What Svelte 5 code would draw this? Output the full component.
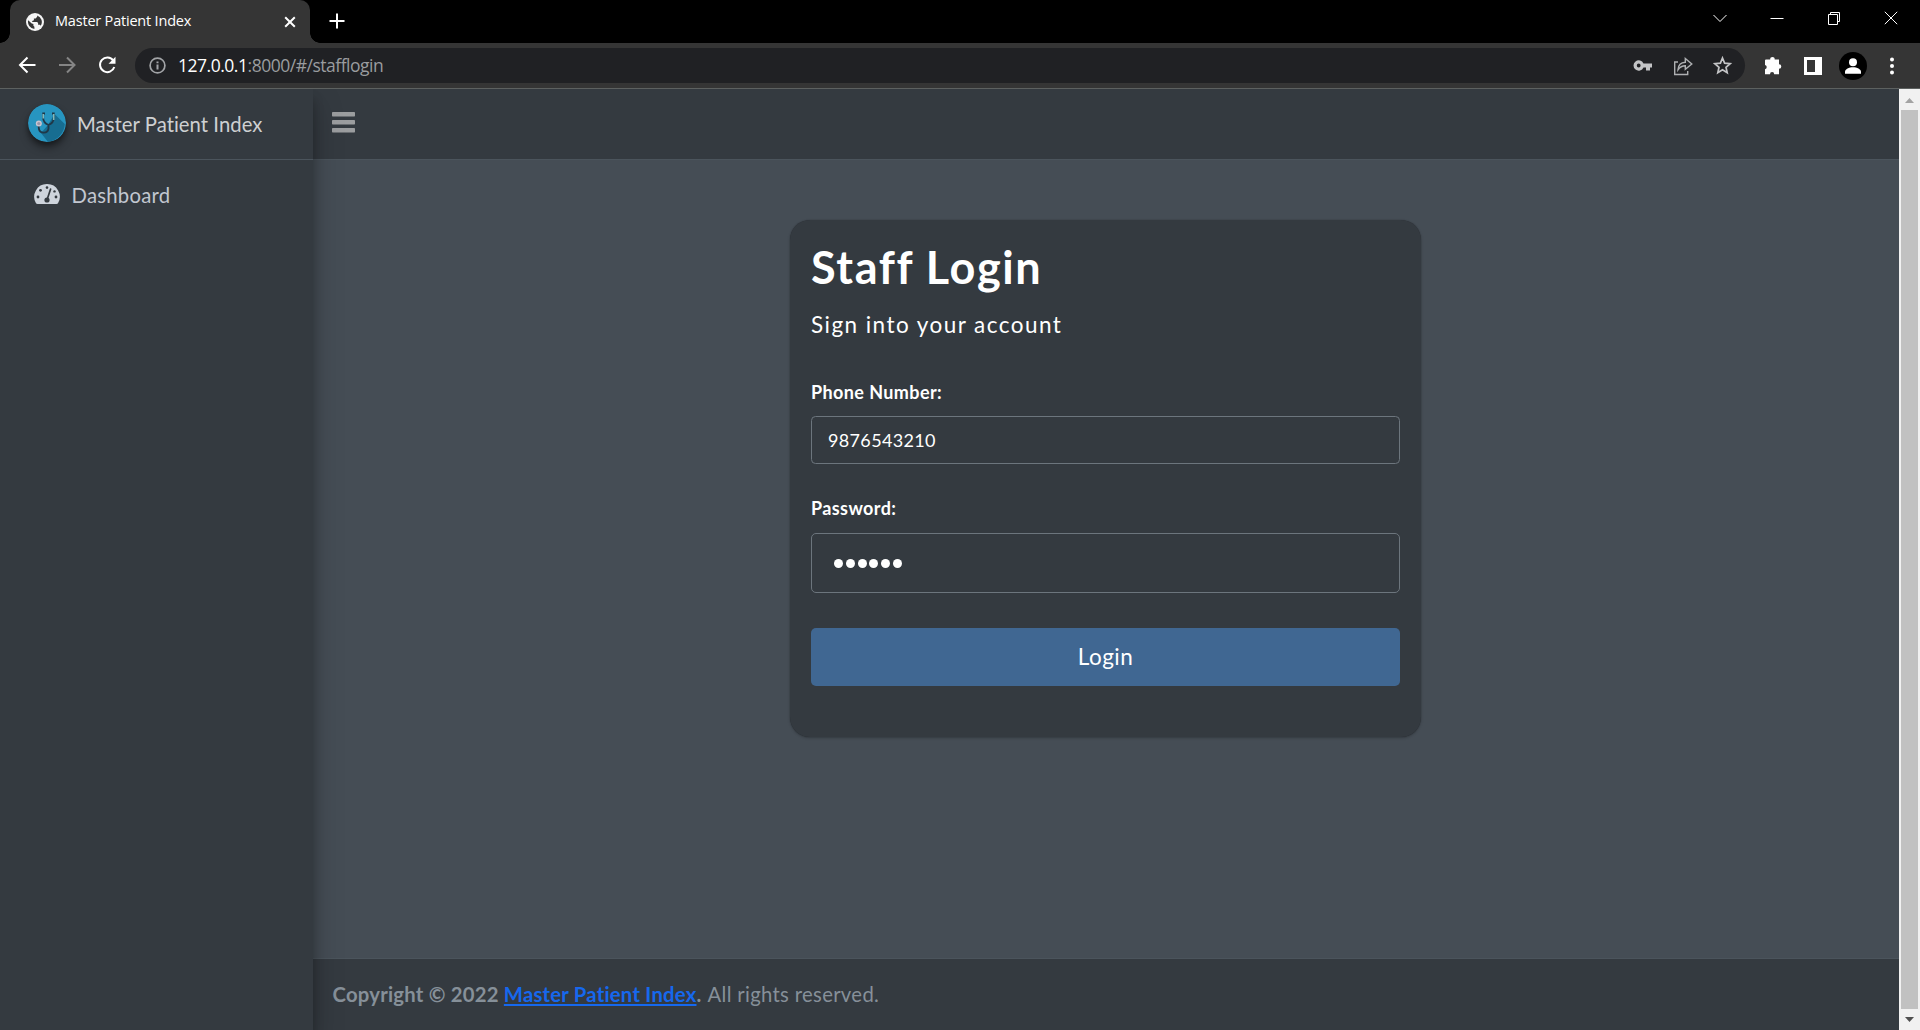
<script>
  const site = 'Master Patient Index';
  let phone = $state('9876543210');
  const dots = [0, 1, 2, 3, 4, 5];
</script>

<div class="window">
  <div class="tabstrip">
    <div class="tab">
      <svg class="globe" width="18" height="18" viewBox="0 0 18 18">
        <circle cx="9" cy="9" r="9" fill="#f5f5f5" />
        <path d="M2.2 7.2 5.7 10.6 7.4 11v1.8l1 .9v2.2A7 7 0 0 1 2.2 7.2ZM11.2 2.4v1.4L9.6 5.4H7.9v1.8L6.2 8v1h4.9l1 1v1.8h1.8l.8.9A6.9 6.9 0 0 0 11.2 2.4Z" fill="#353535" />
      </svg>
      <span class="tabtitle">{site}</span>
      <svg width="12" height="12" viewBox="0 0 12 12" stroke="#fff" stroke-width="2"><path d="m1.2 1.2 9.6 9.6m0-9.6-9.6 9.6" /></svg>
    </div>
    <svg class="plus" width="16" height="16" viewBox="0 0 16 16" stroke="#fff" stroke-width="2"><path d="M8 .5v15M.5 8h15" /></svg>
    <div class="controls">
      <svg width="14" height="14" viewBox="0 0 14 14"><path d="m.5 4 6.5 6.5L13.500 4" /></svg>
      <svg width="14" height="14" viewBox="0 0 14 14"><path d="M.5 7.5h13" /></svg>
      <svg width="14" height="14" viewBox="0 0 14 14"><path d="M1.500 3.500h9v10h-9zM3.500 3.500v-2h9v9h-2" /></svg>
      <svg width="14" height="14" viewBox="0 0 14 14"><path d="m.8.8 12.4 12.4m0-12.4L.8 13.2" /></svg>
    </div>
  </div>

  <div class="toolbar">
    <div class="nav">
      <svg width="18" height="18" viewBox="0 0 18 18" stroke="#fff"><path d="M17.500 9H2m7.500-7.500L2 9l7.500 7.500" /></svg>
      <svg width="18" height="18" viewBox="0 0 18 18" stroke="#858585"><path d="M1 9h15.500M9 1.500 16.500 9 9 16.500" /></svg>
      <svg width="18" height="18" viewBox="0 0 18 18" stroke="#fff"><path d="M15.300 4.600A7.300 7.300 0 1 0 16.300 11" /><path d="M17.500.8v7h-7z" fill="#fff" stroke="none" /></svg>
    </div>
    <div class="address">
      <svg class="info" width="18" height="18" viewBox="0 0 18 18" fill="none" stroke="#a2a4a7" stroke-width="1.700"><circle cx="9.500" cy="8.500" r="7.400" /><path d="M9.500 7.500v5M9.500 4.500v1.800" stroke-width="2" /></svg>
      <span class="url"><b>127.0.0.1</b>:8000/#/stafflogin</span>
      <div class="actions">
        <svg width="20" height="20" viewBox="0 0 20 20"><path fill="#c3c4c6" fill-rule="evenodd" d="M10.500 7.500A5.200 5.200 0 1 0 10.500 11.500H13v3h4v-3h2v-4ZM5.700 7.600a1.900 1.900 0 1 1 0 3.800 1.900 1.900 0 0 1 0-3.800Z" /></svg>
        <svg width="20" height="20" viewBox="0 0 20 20" fill="none" stroke="#aeb0b2" stroke-width="1.400"><path d="M5 6H1.700v12.500h13V15M5 13.800C5.300 9 8 6.500 12.300 6.300V2.500L18.800 8l-6.500 5.300V9.800C9 9.800 7 11 5 13.800Z" /></svg>
        <svg width="20" height="20" viewBox="0 0 20 20" fill="none" stroke="#c3c4c6" stroke-width="1.700"><path d="m9.500 2 2.100 5.100 5.600.5-4.200 3.700 1.200 5.400-4.700-2.900-4.700 2.900L6 11.300 1.800 7.600l5.600-.5Z" /></svg>
      </div>
    </div>
    <div class="extras">
      <svg width="20" height="20" viewBox="0 0 20 20" fill="#fff"><path d="M3 3.600h4.300a2.200 2.200 0 1 1 4.300 0H16v4.600a2.300 2.300 0 1 1 0 4.600v5.400h-4.800a2.100 2.100 0 0 0-4.200 0H2v-5a2.200 2.200 0 0 0 0-4.300V4.600a1 1 0 0 1 1-1Z" /></svg>
      <svg width="20" height="20" viewBox="0 0 20 20"><path fill="#fff" fill-rule="evenodd" d="M1 1h18v18H1Zm3 3v12h8V4Z" /></svg>
      <svg width="28" height="28" viewBox="0 0 28 28"><circle cx="14" cy="14" r="14" fill="#000" /><circle cx="14" cy="10.200" r="4" fill="#fff" /><path fill="#fff" d="M6 21.700v-2c0-2.700 4-4.500 8-4.500s8 1.800 8 4.500v2Z" /></svg>
      <svg width="6" height="18" viewBox="0 0 6 18" fill="#fff"><circle cx="3" cy="2.500" r="2" /><circle cx="3" cy="9" r="2" /><circle cx="3" cy="15.500" r="2" /></svg>
    </div>
  </div>

  <div class="page">
    <aside>
      <div class="brand">
        <svg class="logo" width="38" height="38" viewBox="0 0 38 38">
          <circle cx="19" cy="19" r="19" fill="#2795c0" />
          <path d="M26.500 10 36.800 20A19 19 0 0 1 20 37.900L13 29l7-8Z" fill="#176d91" />
          <g fill="none" stroke="#203848" stroke-width="1.800">
            <path d="M17 9.500h-1.800V14c0 4 2.500 5.800 5.300 7 2.800-1.200 5.300-3 5.300-7V9.500H24M20.500 20.500v4a4.900 4.900 0 0 1-9.600.5L10.500 21" />
          </g>
          <path d="M15.200 10v4.500M25.800 10v6" stroke="#9fd8d4" stroke-width="1.200" />
          <circle cx="10.800" cy="19.500" r="3" fill="#c9c4d0" /><circle cx="10.800" cy="19.500" r="1.600" fill="#9995a8" />
        </svg>
        <span>{site}</span>
      </div>
      <div class="menuitem">
        <svg width="26" height="21" viewBox="0 0 26 21">
          <path fill="#ced4dc" d="M13 0A12.700 12.700 0 0 0 2 19.200Q2.500 20 3.500 20h19q1 0 1.500-.8A12.700 12.700 0 0 0 13 0Z" />
          <g fill="#343a40"><circle cx="13" cy="3.600" r="1.300" /><circle cx="6.500" cy="6.300" r="1.400" /><circle cx="4" cy="13" r="1.400" /><circle cx="20.500" cy="7.400" r="1.200" /><circle cx="22" cy="13" r="1.400" /><circle cx="13" cy="16" r="2.600" /></g>
          <path d="m13.300 15 3.300-10" stroke="#343a40" stroke-width="1.700" stroke-linecap="round" />
        </svg>
        <span>Dashboard</span>
      </div>
    </aside>

    <div class="content">
      <header>
        <svg width="23" height="21" viewBox="0 0 23 21" fill="#9b9d9f"><rect width="23" height="4.500" rx=".7" /><rect y="8" width="23" height="4.500" rx=".7" /><rect y="16" width="23" height="4.500" rx=".7" /></svg>
      </header>
      <main>
        <form class="card">
          <h1>Staff Login</h1>
          <p class="sub">Sign into your account</p>
          <label class="phonelabel" for="phone">Phone Number:</label>
          <input id="phone" bind:value={phone} />
          <label class="passlabel" for="pass">Password:</label>
          <div id="pass" class="password">
            {#each dots as dot (dot)}<i></i>{/each}
          </div>
          <button type="button">Login</button>
        </form>
      </main>
      <footer>
        <strong>Copyright © 2022 <a href="#/">{site}</a>.</strong>
        <span class="rights">All rights reserved.</span>
      </footer>
    </div>

    <div class="scrollbar">
      <svg width="21" height="21" viewBox="0 0 21 21"><path d="m6 14 4.500-5 4.500 5Z" fill="#a3a3a3" /></svg>
      <div class="thumb"></div>
      <svg width="21" height="21" viewBox="0 0 21 21"><path d="m6 8 4.500 5L15 8Z" fill="#505050" /></svg>
    </div>
  </div>
</div>

<style>
  :global(body) { overflow: hidden; background: #000; }
  * { box-sizing: border-box; }
  svg { display: block; flex: none; }
  .window { width: 1920px; height: 1030px; display: flex; flex-direction: column; font-family: Lato, 'Liberation Sans', sans-serif; }

  .tabstrip { height: 43px; background: #000; display: flex; align-items: center; font-family: 'Open Sans', 'Noto Sans', sans-serif; }
  .tab { position: relative; width: 300px; height: 43px; margin-left: 10px; padding: 0 14px 0 16px; border-radius: 10px 10px 0 0; background: #353535; display: flex; align-items: center; }
  .tab::before, .tab::after { content: ''; position: absolute; bottom: 0; width: 10px; height: 10px; }
  .tab::before { left: -10px; background: radial-gradient(circle at 0 0, #000 9.500px, #353535 10px); }
  .tab::after { right: -10px; background: radial-gradient(circle at 100% 0, #000 9.500px, #353535 10px); }
  .tabtitle { flex: 1; margin-left: 11px; color: #fff; font-size: 14.500px; letter-spacing: -0.2px; line-height: 40px; padding-bottom: 2px; white-space: nowrap; }
  .plus { margin: 0 0 1px 19px; }
  .controls { margin-left: auto; padding: 0 22px 7px 0; display: flex; gap: 43px; }
  .controls svg { fill: none; stroke: #fff; stroke-width: 1; }

  .toolbar { height: 46px; background: #353535; border-bottom: 1px solid #5d6160; display: flex; align-items: center; }
  .nav { width: 135px; padding: 0 0 1px 18px; display: flex; gap: 22px; }
  .nav svg { fill: none; stroke-width: 2; }
  .address { width: 1610px; height: 35px; border-radius: 18px; background: #202124; display: flex; align-items: center; padding: 0 12px 0 13px; font-family: 'Open Sans', 'Noto Sans', sans-serif; }
  .url { margin-left: 12px; padding-bottom: 1px; color: #9a9c9f; font-size: 17.500px; letter-spacing: -0.480px; white-space: nowrap; }
  .url b { color: #fff; font-weight: 400; }
  .actions { margin-left: auto; display: flex; gap: 20px; }
  .extras { margin-left: 18px; display: flex; align-items: center; gap: 20px; }
  .extras svg:nth-child(3) { margin-left: -4px; }
  .extras svg:nth-child(4) { margin-left: 2px; }

  .page { flex: 1; min-height: 0; display: flex; background: #454d55; }
  aside { position: relative; z-index: 1; width: 313px; background: #343a40; box-shadow: 0 14px 28px rgba(0, 0, 0, .25), 0 10px 10px rgba(0, 0, 0, .22); clip-path: inset(0 -60px 0 0); }
  .brand { height: 71px; border-bottom: 1px solid #4b545c; padding: 0 0 3px 27.500px; display: flex; align-items: center; color: #ced0d2; font-size: 20.300px; white-space: nowrap; }
  .logo { border-radius: 50%; box-shadow: 0 6px 9px rgba(0, 0, 0, .35), 0 3px 4px rgba(0, 0, 0, .3); }
  .brand span { margin-left: 11.500px; padding-top: 3px; letter-spacing: .04px; }
  .menuitem { height: 68px; padding-left: 34px; display: flex; align-items: center; color: #c2c7d0; font-size: 20.300px; }
  .menuitem span { margin-left: 11.500px; padding-top: 1px; letter-spacing: .25px; }

  .content { width: 1586px; display: flex; flex-direction: column; }
  header { height: 71px; background: #343a40; border-bottom: 1px solid #4b545c; padding: 22.500px 0 0 19px; }
  main { flex: 1; padding-top: 60px; }
  .card { width: 631px; height: 517px; margin-left: 477px; padding: 20px 21px 0; border-radius: 20px; background: #343a40; box-shadow: 0 0 1px rgba(0, 0, 0, .4), 0 1px 3px rgba(0, 0, 0, .22); color: #fff; display: flex; flex-direction: column; }
  h1 { margin: 0; font-size: 45px; line-height: 54px; font-weight: 700; letter-spacing: 1.600px; white-space: nowrap; }
  .sub { margin: 15px 0 0; font-size: 22.500px; line-height: 32px; letter-spacing: 1.450px; white-space: nowrap; }
  label { font-size: 18px; line-height: 24px; font-weight: 700; letter-spacing: .4px; }
  .phonelabel { margin-top: 39px; }
  input { margin-top: 12px; height: 48px; padding: 0 16px 1px; border: 1px solid #6c757d; border-radius: 4.500px; background: transparent; color: #fff; font: 18px Lato, sans-serif; letter-spacing: .35px; outline: none; }
  .passlabel { margin-top: 32px; }
  .password { margin-top: 13px; height: 60px; border: 1px solid #6c757d; border-radius: 5px; padding: 1px 0 0 22px; display: flex; align-items: center; gap: 2.800px; }
  .password i { width: 9px; height: 9px; border-radius: 50%; background: #fff; }
  button { margin-top: 35px; height: 58px; border: 0; border-radius: 5px; background: #406792; color: #fff; font: 22.500px Lato, sans-serif; letter-spacing: .5px; padding: 0 0 2px; }
  footer { height: 72px; background: #343a40; border-top: 1px solid #4b545c; padding: 0 0 1px 19.500px; display: flex; align-items: center; gap: 6px; color: #869099; font-size: 20.300px; letter-spacing: .22px; white-space: nowrap; }
  .rights { letter-spacing: .32px; }
  a { color: #1668ee; text-decoration-thickness: 2px; text-underline-offset: 2px; }

  .scrollbar { width: 21px; background: #f1f1f1; display: flex; flex-direction: column; }
  .thumb { flex: 1; margin: 0 2px; background: #c1c1c1; }
</style>
